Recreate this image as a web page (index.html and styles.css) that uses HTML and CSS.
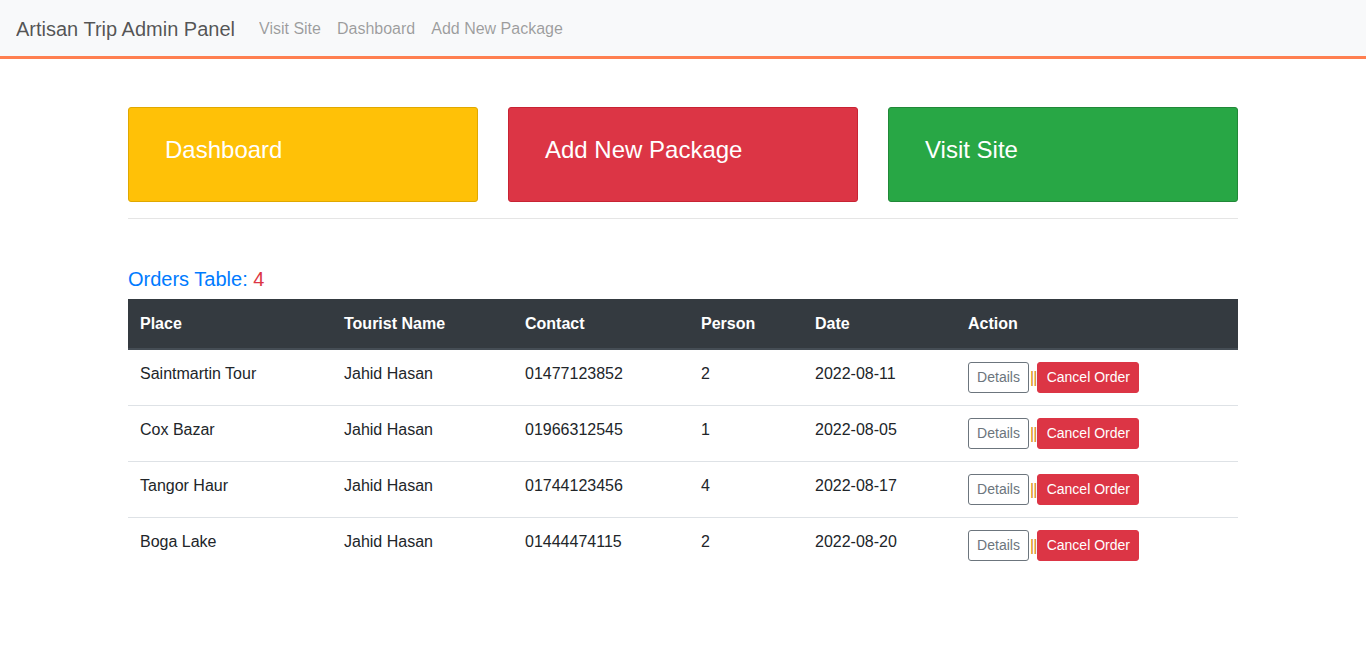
FILE: index.html
```html
<!DOCTYPE html>
<html lang="en">
<head>
<meta charset="utf-8">
<title>Artisan Trip Admin Panel</title>
<link rel="stylesheet" href="styles.css">
</head>
<body>
<nav class="navbar">
  <span class="brand">Artisan Trip Admin Panel</span>
  <a class="nav-link" href="#">Visit Site</a>
  <a class="nav-link" href="#">Dashboard</a>
  <a class="nav-link" href="#">Add New Package</a>
</nav>
<main class="container">
  <div class="cards">
    <div class="card card-yellow">Dashboard</div>
    <div class="card card-red">Add New Package</div>
    <div class="card card-green">Visit Site</div>
  </div>
  <hr class="divider">
  <h4 class="orders-title">Orders Table: <span class="count">4</span></h4>
  <table class="orders">
    <thead>
      <tr>
        <th class="c-place">Place</th>
        <th class="c-name">Tourist Name</th>
        <th class="c-contact">Contact</th>
        <th class="c-person">Person</th>
        <th class="c-date">Date</th>
        <th class="c-action">Action</th>
      </tr>
    </thead>
    <tbody>
      <tr>
        <td>Saintmartin Tour</td><td>Jahid Hasan</td><td>01477123852</td><td>2</td><td>2022-08-11</td>
        <td><div class="actions"><button class="btn btn-outline">Details</button><span class="sep">||</span><button class="btn btn-danger">Cancel Order</button></div></td>
      </tr>
      <tr>
        <td>Cox Bazar</td><td>Jahid Hasan</td><td>01966312545</td><td>1</td><td>2022-08-05</td>
        <td><div class="actions"><button class="btn btn-outline">Details</button><span class="sep">||</span><button class="btn btn-danger">Cancel Order</button></div></td>
      </tr>
      <tr>
        <td>Tangor Haur</td><td>Jahid Hasan</td><td>01744123456</td><td>4</td><td>2022-08-17</td>
        <td><div class="actions"><button class="btn btn-outline">Details</button><span class="sep">||</span><button class="btn btn-danger">Cancel Order</button></div></td>
      </tr>
      <tr>
        <td>Boga Lake</td><td>Jahid Hasan</td><td>01444474115</td><td>2</td><td>2022-08-20</td>
        <td><div class="actions"><button class="btn btn-outline">Details</button><span class="sep">||</span><button class="btn btn-danger">Cancel Order</button></div></td>
      </tr>
    </tbody>
  </table>
</main>
</body>
</html>
```
FILE: styles.css
```css
* { box-sizing: border-box; }
html, body {
  margin: 0;
  padding: 0;
  background: #fff;
  font-family: "Liberation Sans", Arial, sans-serif;
  font-size: 16px;
  line-height: 1.5;
  color: #212529;
}
.navbar {
  display: flex;
  align-items: center;
  height: 59px;
  padding: 2px 16px 1px;
  background: #f8f9fa;
  border-bottom: 3px solid #ff7f50;
}
.brand {
  font-size: 20px;
  color: rgba(0,0,0,.9);
  opacity: .75;
  margin-right: 16px;
  line-height: 30px;
}
.nav-link {
  color: rgba(0,0,0,.5);
  opacity: .75;
  text-decoration: none;
  padding: 8px;
  line-height: 24px;
}
.container {
  width: 1110px;
  margin: 0 auto;
  padding-top: 48px;
}
.cards {
  display: flex;
  gap: 30px;
}
.card {
  flex: 1;
  height: 95px;
  display: flex;
  align-items: center;
  padding-left: 36px;
  border-radius: 3px;
  font-size: 24px;
  color: #fff;
  padding-bottom: 10px;
}
.card-yellow { background: #ffc107; border: 1px solid #e0a800; }
.card-red { background: #dc3545; border: 1px solid #c82333; }
.card-green { background: #28a745; border: 1px solid #218838; }
.divider {
  margin: 16px 0 0;
  border: 0;
  border-top: 1px solid rgba(0,0,0,.1);
}
.orders-title {
  margin: 48px 0 8px;
  font-size: 20px;
  font-weight: 400;
  line-height: 24px;
  color: #007bff;
}
.count { color: #dc3545; }
.orders {
  width: 100%;
  border-collapse: collapse;
}
.orders th {
  background: #343a40;
  color: #fff;
  font-weight: 700;
  text-align: left;
  padding: 12px;
  border-bottom: 2px solid #454d55;
  vertical-align: bottom;
  height: 50px;
}
.orders td {
  padding: 12px;
  border-top: 1px solid #dee2e6;
  vertical-align: top;
  height: 56px;
}
.orders tbody tr:first-child td { border-top: 0; height: 55px; }
.c-place { width: 204px; }
.c-name { width: 181px; }
.c-contact { width: 176px; }
.c-person { width: 114px; }
.c-date { width: 153px; }
.actions {
  display: flex;
  align-items: center;
  gap: 1px;
}
.btn {
  font-family: inherit;
  font-size: 14px;
  line-height: 21px;
  padding: 4px 8px;
  border-radius: 3px;
  cursor: pointer;
}
.btn-outline {
  background: #fff;
  color: #6c757d;
  border: 1px solid #6c757d;
  width: 61px;
}
.btn-danger {
  background: #dc3545;
  color: #fff;
  border: 1px solid #dc3545;
  width: 102px;
}
.sep {
  color: #d98a0a;
  font-size: 16px;
  line-height: 24px;
  letter-spacing: -1px;
}
```
